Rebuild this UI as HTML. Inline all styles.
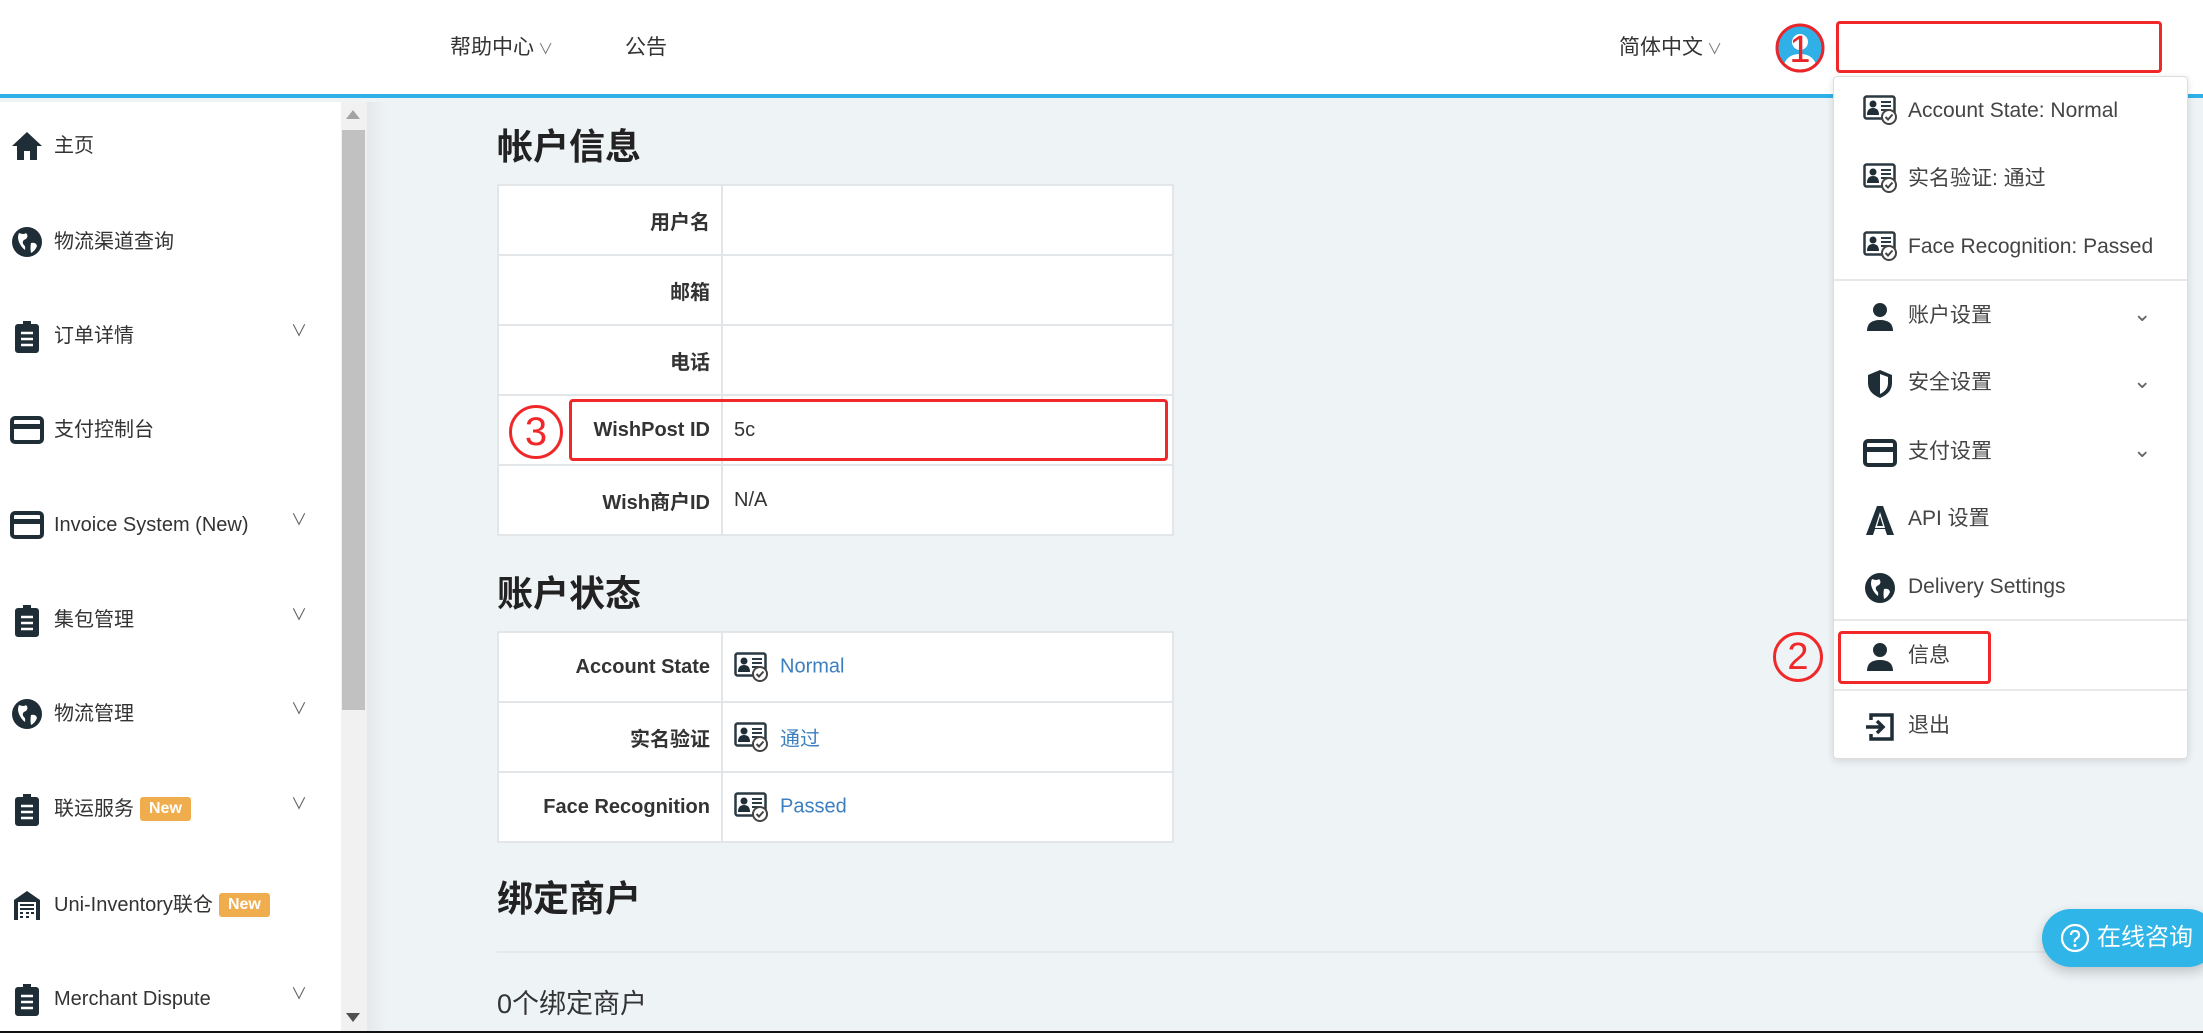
<!DOCTYPE html>
<html><head><meta charset="utf-8">
<style>
*{margin:0;padding:0;box-sizing:border-box}
body{width:2203px;height:1033px;overflow:hidden;background:#eef3f6;font-family:"Liberation Sans","Noto Sans CJK SC",sans-serif;color:#333;position:relative}
.a{position:absolute}
.hdr{left:0;top:0;width:2203px;height:98px;background:#fff;border-bottom:4px solid #2fb0e6}
.nav{font-size:21px;color:#333;top:34px;line-height:28px}
.side{left:0;top:102px;width:341px;height:929px;background:#fff}
.sb{left:341px;top:102px;width:26px;height:929px;background:#f1f1f1}
.thumb{left:342px;top:130px;width:23px;height:580px;background:#c1c1c1}
.shadow{left:367px;top:102px;width:20px;height:929px;background:linear-gradient(90deg,#e4e8ea,#eef3f6)}
.si{left:0;height:40px;width:341px;font-size:20px;line-height:40px;color:#333}
.si svg{position:absolute;left:10px;top:3px}
.si span.t{position:absolute;left:54px;top:0;white-space:nowrap}
.chev{position:absolute;left:291px;top:-4px;font-size:16px;color:#666}
.badge{display:inline-block;background:#f0ad4e;color:#fff;font-size:16px;font-weight:bold;line-height:24px;padding:0 9px;border-radius:3px;vertical-align:middle;margin-left:6px;position:relative;top:-1px}
h2{position:absolute;font-size:36px;font-weight:bold;color:#222;left:497px}
table{position:absolute;left:497px;border-collapse:collapse;background:#fff;width:677px}
td{border:2px solid #e3e6e8;height:70px;font-size:20px}
td.l{width:224px;text-align:right;font-weight:bold;padding-right:11px;color:#333}
td.v{padding-left:11px;color:#333}
td.v a{color:#3c7fc0;text-decoration:none;vertical-align:middle}
td.v svg{vertical-align:middle;margin-right:12px}
.dd{left:1833px;top:76px;width:355px;height:683px;background:#fff;border:1px solid #ddd;border-radius:4px;box-shadow:0 2px 8px rgba(0,0,0,.12)}
.di{left:1833px;width:355px;height:40px;font-size:21px;line-height:40px;color:#444}
.di svg{position:absolute;left:30px;top:4px}
.di .t{position:absolute;left:75px;white-space:nowrap}
.di .c{position:absolute;left:300px;top:-2px;color:#666;font-size:22px}
.hr{left:1834px;width:353px;height:2px;background:#e8e8e8}
</style></head><body>
<svg width="0" height="0" style="position:absolute">
<defs>
<symbol id="card" viewBox="0 0 34 30"><rect x="1.5" y="1.5" width="30" height="22" rx="2" fill="#fff" stroke="#2b3a42" stroke-width="2.5"/><circle cx="10" cy="9" r="3.5" fill="#1f2d36"/><path d="M4 20q0-7 6-7t6 7z" fill="#1f2d36"/><path d="M18 7h10M18 11h10M18 15h7" stroke="#2b3a42" stroke-width="2"/><circle cx="26" cy="22" r="7" fill="#fff" stroke="#444" stroke-width="2"/><path d="M22.5 22l2.5 2.5 4.5-5" fill="none" stroke="#444" stroke-width="2"/></symbol>
<symbol id="clip" viewBox="0 0 34 34"><path d="M13 2h8v3h5a3 3 0 0 1 3 3v23a3 3 0 0 1-3 3H8a3 3 0 0 1-3-3V8a3 3 0 0 1 3-3h5z" fill="#1f2d36"/><path d="M11 14h12M11 20h12M11 26h12" stroke="#fff" stroke-width="2.5"/></symbol>
<symbol id="globe" viewBox="0 0 34 34"><circle cx="17" cy="17" r="15" fill="#1f2d36"/><path d="M9 8q5 2 7 0 3 3 0 6-4 1-3 5 3 2 2 6-4-3-6-8-2-5 0-9zM21 18q5-1 6 3-2 5-6 7-1-5 0-10z" fill="#fff"/></symbol>
<symbol id="pcard" viewBox="0 0 34 34"><rect x="2" y="5" width="30" height="24" rx="3" fill="none" stroke="#1f2d36" stroke-width="4"/><rect x="2" y="11" width="30" height="5" fill="#1f2d36"/></symbol>
<symbol id="user" viewBox="0 0 34 34"><circle cx="17" cy="10" r="7" fill="#1f2d36"/><path d="M4 31q0-11 13-11t13 11z" fill="#1f2d36"/></symbol>
</defs></svg>

<div class="a hdr"></div>
<div class="a nav" style="left:450px">帮助中心<span style="font-size:15px;color:#777"> ∨</span></div>
<div class="a nav" style="left:625px">公告</div>
<div class="a nav" style="left:1619px">简体中文<span style="font-size:15px;color:#777"> ∨</span></div>
<svg class="a" style="left:1774px;top:22px" width="52" height="52" viewBox="0 0 52 52"><circle cx="26" cy="26" r="22" fill="#2fb0e6"/><circle cx="26" cy="20" r="8" fill="#fff"/><path d="M10 42q4-10 16-10t16 10q-7 6-16 6t-16-6z" fill="#fff"/><circle cx="26" cy="26" r="23" fill="none" stroke="#e8262a" stroke-width="3"/><text x="26" y="40" text-anchor="middle" font-size="38" fill="#e8262a" font-family="Liberation Sans">1</text></svg>
<div class="a" style="left:1836px;top:21px;width:326px;height:52px;border:3px solid #f0282a;border-radius:4px"></div>

<div class="a side"></div>
<div class="a sb"></div>
<div class="a" style="left:346px;top:110px;width:0;height:0;border-left:7px solid transparent;border-right:7px solid transparent;border-bottom:9px solid #a3a3a3"></div>
<div class="a thumb"></div>
<div class="a" style="left:346px;top:1013px;width:0;height:0;border-left:7px solid transparent;border-right:7px solid transparent;border-top:9px solid #505050"></div>
<div class="a shadow"></div>

<div class="a si" style="top:126px"><svg width="34" height="34" viewBox="0 0 34 34"><path d="M17 3L2 17h5v14h7v-9h6v9h7V17h5z" fill="#1f2d36"/></svg><span class="t">主页</span></div>
<div class="a si" style="top:222px"><svg width="34" height="34"><use href="#globe"/></svg><span class="t">物流渠道查询</span></div>
<div class="a si" style="top:316px"><svg width="34" height="34"><use href="#clip"/></svg><span class="t">订单详情</span><span class="chev">∨</span></div>
<div class="a si" style="top:410px"><svg width="34" height="34"><use href="#pcard"/></svg><span class="t">支付控制台</span></div>
<div class="a si" style="top:505px"><svg width="34" height="34"><use href="#pcard"/></svg><span class="t">Invoice System (New)</span><span class="chev">∨</span></div>
<div class="a si" style="top:600px"><svg width="34" height="34"><use href="#clip"/></svg><span class="t">集包管理</span><span class="chev">∨</span></div>
<div class="a si" style="top:694px"><svg width="34" height="34"><use href="#globe"/></svg><span class="t">物流管理</span><span class="chev">∨</span></div>
<div class="a si" style="top:789px"><svg width="34" height="34"><use href="#clip"/></svg><span class="t">联运服务<span class="badge">New</span></span><span class="chev">∨</span></div>
<div class="a si" style="top:885px"><svg width="34" height="34" viewBox="0 0 34 34"><path d="M17 3L4 12v20h26V12z" fill="#1f2d36"/><rect x="8" y="14" width="18" height="18" fill="#fff"/><path d="M10 17h14M10 21h14M10 25h3M16 25h3M21 25h3M10 29h3M16 29h3" stroke="#1f2d36" stroke-width="2"/></svg><span class="t">Uni-Inventory联仓<span class="badge">New</span></span></div>
<div class="a si" style="top:979px"><svg width="34" height="34"><use href="#clip"/></svg><span class="t">Merchant Dispute</span><span class="chev">∨</span></div>

<h2 style="top:118px">帐户信息</h2>
<table style="top:184px">
<tr><td class="l">用户名</td><td class="v"></td></tr>
<tr><td class="l">邮箱</td><td class="v"></td></tr>
<tr><td class="l">电话</td><td class="v"></td></tr>
<tr><td class="l">WishPost ID</td><td class="v">5c</td></tr>
<tr><td class="l">Wish商户ID</td><td class="v">N/A</td></tr>
</table>
<div class="a" style="left:569px;top:399px;width:599px;height:62px;border:3px solid #f0282a;border-radius:4px"></div>
<div class="a" style="left:509px;top:405px;width:54px;height:54px;border:3px solid #f0282a;border-radius:50%;color:#f0282a;font-size:40px;line-height:48px;text-align:center">3</div>

<h2 style="top:565px">账户状态</h2>
<table style="top:631px">
<tr><td class="l">Account State</td><td class="v"><svg width="34" height="30"><use href="#card"/></svg><a>Normal</a></td></tr>
<tr><td class="l">实名验证</td><td class="v"><svg width="34" height="30"><use href="#card"/></svg><a>通过</a></td></tr>
<tr><td class="l">Face Recognition</td><td class="v"><svg width="34" height="30"><use href="#card"/></svg><a>Passed</a></td></tr>
</table>

<h2 style="top:870px">绑定商户</h2>
<div class="a" style="left:497px;top:951px;width:1706px;height:2px;background:#e5e9ec"></div>
<div class="a" style="left:497px;top:982px;font-size:27px;color:#333">0个绑定商户</div>

<div class="a dd"></div>
<div class="a di" style="top:91px"><svg width="34" height="30"><use href="#card"/></svg><span class="t">Account State: Normal</span></div>
<div class="a di" style="top:159px"><svg width="34" height="30"><use href="#card"/></svg><span class="t">实名验证: 通过</span></div>
<div class="a di" style="top:227px"><svg width="34" height="30"><use href="#card"/></svg><span class="t">Face Recognition: Passed</span></div>
<div class="a hr" style="top:279px"></div>
<div class="a di" style="top:296px"><svg width="34" height="34"><use href="#user"/></svg><span class="t">账户设置</span><span class="c">⌄</span></div>
<div class="a di" style="top:363px"><svg width="34" height="34" viewBox="0 0 34 34"><path d="M17 3l12 5v8q0 10-12 15Q5 26 5 16V8z" fill="#1f2d36"/><path d="M17 7v20q8-4 8-11V10z" fill="#fff"/></svg><span class="t">安全设置</span><span class="c">⌄</span></div>
<div class="a di" style="top:432px"><svg width="34" height="34"><use href="#pcard"/></svg><span class="t">支付设置</span><span class="c">⌄</span></div>
<div class="a di" style="top:499px"><svg width="34" height="34" viewBox="0 0 34 34"><path d="M14 3h6l11 29h-7l-2-6H12l-2 6H3z" fill="#1f2d36"/><path d="M17 9l-5 16h10z" fill="#fff"/><path d="M17 13l-3 10h6z" fill="#1f2d36"/></svg><span class="t">API 设置</span></div>
<div class="a di" style="top:567px"><svg width="34" height="34"><use href="#globe"/></svg><span class="t">Delivery Settings</span></div>
<div class="a hr" style="top:619px"></div>
<div class="a di" style="top:636px"><svg width="34" height="34"><use href="#user"/></svg><span class="t">信息</span></div>
<div class="a" style="left:1838px;top:631px;width:153px;height:53px;border:3px solid #f0282a;border-radius:4px"></div>
<div class="a" style="left:1773px;top:632px;width:50px;height:50px;border:3px solid #f0282a;border-radius:50%;color:#f0282a;font-size:38px;line-height:44px;text-align:center">2</div>
<div class="a hr" style="top:689px"></div>
<div class="a di" style="top:706px"><svg width="34" height="34" viewBox="0 0 34 34"><path d="M8 10V5h21v24H8v-5" fill="none" stroke="#1f2d36" stroke-width="3.5"/><path d="M3 17h16M14 11l6 6-6 6" fill="none" stroke="#1f2d36" stroke-width="3.5"/></svg><span class="t">退出</span></div>

<div class="a" style="left:2042px;top:909px;width:175px;height:58px;background:#2fb5e8;border-radius:29px;box-shadow:0 5px 12px rgba(0,0,0,.2);color:#fff;font-size:24px;line-height:58px;padding-left:55px">在线咨询</div>
<svg class="a" style="left:2060px;top:923px" width="30" height="30" viewBox="0 0 30 30"><circle cx="15" cy="15" r="13" fill="none" stroke="#fff" stroke-width="2.2"/><path d="M11 12q0-4 4-4t4 4q0 2-2.5 3.5T15 19" fill="none" stroke="#fff" stroke-width="2.2"/><circle cx="15" cy="22.5" r="1.5" fill="#fff"/></svg>
<div class="a" style="left:0;top:1031px;width:2203px;height:2px;background:#111"></div>
</body></html>
